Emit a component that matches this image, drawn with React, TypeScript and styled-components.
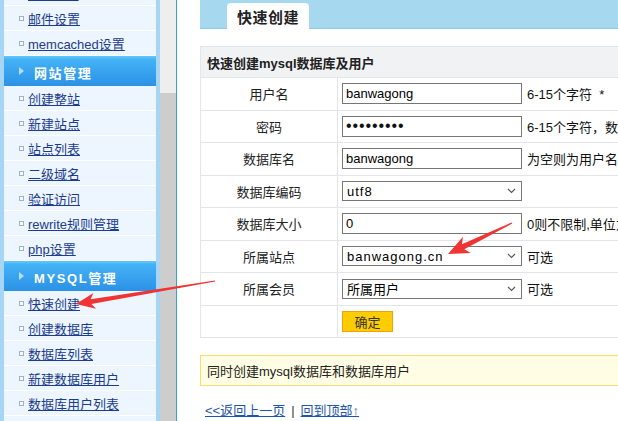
import React from 'react';
import styled, { createGlobalStyle } from 'styled-components';

const GlobalStyle = createGlobalStyle`
  html, body {
    margin: 0;
    padding: 0;
    overflow: hidden;
    background: #fff;
  }
  body {
    font-family: "Liberation Sans", "Noto Sans CJK SC", sans-serif;
    font-size: 13px;
    color: #333;
  }
`;

type MenuEntry = { head?: boolean; text: string };

const menu: MenuEntry[] = [
  { text: 'FTP设置' },
  { text: '邮件设置' },
  { text: 'memcached设置' },
  { head: true, text: '网站管理' },
  { text: '创建整站' },
  { text: '新建站点' },
  { text: '站点列表' },
  { text: '二级域名' },
  { text: '验证访问' },
  { text: 'rewrite规则管理' },
  { text: 'php设置' },
  { head: true, text: 'MYSQL管理' },
  { text: '快速创建' },
  { text: '创建数据库' },
  { text: '数据库列表' },
  { text: '新建数据库用户' },
  { text: '数据库用户列表' },
  { text: '修改数据库密码' },
];

type Pt = [number, number];

// tapered annotation arrow, thin at the tail and wide at the head
const arrowPoints = (tail: Pt, tip: Pt, headLen: number, headHalf: number, neck: number) => {
  const dx = tip[0] - tail[0];
  const dy = tip[1] - tail[1];
  const len = Math.hypot(dx, dy);
  const ux = dx / len;
  const uy = dy / len;
  const nx = -uy;
  const ny = ux;
  const at = (d: number, w: number): Pt => [tip[0] - ux * d + nx * w, tip[1] - uy * d + ny * w];
  const pts: Pt[] = [
    [tail[0] + nx * 0.6, tail[1] + ny * 0.6],
    at(headLen * 0.8, neck),
    at(headLen, headHalf),
    tip,
    at(headLen, -headHalf),
    at(headLen * 0.8, -neck),
    [tail[0] - nx * 0.6, tail[1] - ny * 0.6],
  ];
  return pts.map(p => `${p[0].toFixed(1)},${p[1].toFixed(1)}`).join(' ');
};

const App = () => {
  return (
    <>
      <GlobalStyle />
      <Page>
        <Sidebar>
          <MenuColumn>
            <MenuList>
              {menu.map((m, i) =>
                m.head ? (
                  <MenuHead key={i}>
                    <HeadArrow />
                    <HeadText>{m.text}</HeadText>
                  </MenuHead>
                ) : (
                  <MenuItem key={i}>
                    <Bullet />
                    <MenuLink href="#">{m.text}</MenuLink>
                  </MenuItem>
                )
              )}
            </MenuList>
          </MenuColumn>
          <ScrollTrack>
            <ScrollThumb />
          </ScrollTrack>
        </Sidebar>

        <Main>
          <TabBar>
            <Tab>快速创建</Tab>
          </TabBar>

          <FormTable>
            <colgroup>
              <LabelCol />
              <col />
            </colgroup>
            <tbody>
              <HeadRow>
                <HeadCell colSpan={2}>快速创建mysql数据库及用户</HeadCell>
              </HeadRow>
              <Row>
                <LabelCell>用户名</LabelCell>
                <FieldCell>
                  <FieldLine>
                    <TextInput readOnly value="banwagong" />
                    <Hint>6-15个字符 &nbsp;*</Hint>
                  </FieldLine>
                </FieldCell>
              </Row>
              <Row>
                <LabelCell>密码</LabelCell>
                <FieldCell>
                  <FieldLine>
                    <PasswordInput type="password" readOnly value="123456789" />
                    <Hint>6-15个字符，数字、字母</Hint>
                  </FieldLine>
                </FieldCell>
              </Row>
              <Row>
                <LabelCell>数据库名</LabelCell>
                <FieldCell>
                  <FieldLine>
                    <TextInput readOnly value="banwagong" />
                    <Hint>为空则为用户名</Hint>
                  </FieldLine>
                </FieldCell>
              </Row>
              <Row>
                <LabelCell>数据库编码</LabelCell>
                <FieldCell>
                  <FieldLine>
                    <SelectBox>
                      <span>utf8</span>
                      <Chevron />
                    </SelectBox>
                  </FieldLine>
                </FieldCell>
              </Row>
              <Row>
                <LabelCell>数据库大小</LabelCell>
                <FieldCell>
                  <FieldLine>
                    <TextInput readOnly value="0" />
                    <Hint>0则不限制,单位为M</Hint>
                  </FieldLine>
                </FieldCell>
              </Row>
              <Row>
                <LabelCell>所属站点</LabelCell>
                <FieldCell>
                  <FieldLine>
                    <SelectBox>
                      <span>banwagong.cn</span>
                      <Chevron />
                    </SelectBox>
                    <Hint>可选</Hint>
                  </FieldLine>
                </FieldCell>
              </Row>
              <Row>
                <LabelCell>所属会员</LabelCell>
                <FieldCell>
                  <FieldLine>
                    <SelectBox $plain>
                      <span>所属用户</span>
                      <Chevron />
                    </SelectBox>
                    <Hint>可选</Hint>
                  </FieldLine>
                </FieldCell>
              </Row>
              <Row>
                <LabelCell />
                <FieldCell>
                  <FieldLine>
                    <SubmitButton type="button">确定</SubmitButton>
                  </FieldLine>
                </FieldCell>
              </Row>
            </tbody>
          </FormTable>

          <Notice>同时创建mysql数据库和数据库用户</Notice>

          <Footer>
            <FootLink href="#">&lt;&lt;返回上一页</FootLink>
            <Divider>|</Divider>
            <FootLink href="#">回到顶部↑</FootLink>
          </Footer>
        </Main>

        <Overlay width="618" height="421" viewBox="0 0 618 421">
          <polygon points={arrowPoints([215, 281], [76, 304], 19, 8, 2.4)} fill="#f03333" />
          <polygon points={arrowPoints([512, 223], [448, 254], 21, 9, 2.8)} fill="#f03333" />
        </Overlay>
      </Page>
    </>
  );
};

const Chevron = () => (
  <svg width="9" height="6" viewBox="0 0 9 6">
    <path d="M1 1l3.5 3.5L8 1" fill="none" stroke="#555" strokeWidth="1.1" />
  </svg>
);

const Page = styled.div`
  position: relative;
  display: flex;
  width: 800px;
  height: 421px;
  overflow: hidden;
`;

const Sidebar = styled.div`
  display: flex;
  flex: 0 0 177px;
  height: 100%;
`;

const MenuColumn = styled.div`
  width: 152px;
  border-left: 4px solid #a6d5f7;
  border-right: 4px solid #a6d5f7;
  background: #edf5fe;
  overflow: hidden;
`;

const MenuList = styled.div`
  margin-top: -19px;
`;

const MenuItem = styled.div`
  display: flex;
  align-items: center;
  height: 24px;
  border-bottom: 1px solid #fff;
  padding-left: 15px;
`;

const Bullet = styled.span`
  flex: none;
  width: 3px;
  height: 3px;
  border: 1px solid #9cb3cc;
  background: #f6f9fd;
  margin-right: 4px;
`;

const MenuLink = styled.a`
  color: #1b3c8f;
  font-size: 13px;
  text-decoration: underline;
  white-space: nowrap;
`;

const MenuHead = styled.div`
  display: flex;
  align-items: center;
  height: 30px;
  box-sizing: border-box;
  padding: 2px 0 0 15px;
  background: linear-gradient(#62c9fd 0, #44b2f6 12%, #2b91e6 100%);
`;

const HeadArrow = styled.span`
  width: 0;
  height: 0;
  border-top: 4px solid transparent;
  border-bottom: 4px solid transparent;
  border-left: 5px solid #b5dcfb;
  margin: -3px 10px 0 0;
`;

const HeadText = styled.span`
  color: #fff;
  font-weight: bold;
  font-size: 13px;
  letter-spacing: 1.6px;
`;

const ScrollTrack = styled.div`
  display: flex;
  flex-direction: column;
  width: 16px;
  background: #eeeeee;
  border-right: 1px solid #2fa2e2;
`;

const ScrollThumb = styled.div`
  flex: 1;
  margin-top: 93px;
  background: #cdcdcd;
`;

const Main = styled.div`
  display: flex;
  flex-direction: column;
  padding-left: 23px;
  width: 600px;
`;

const TabBar = styled.div`
  height: 29px;
  box-sizing: border-box;
  padding: 3px 0 0 27px;
  background: #a6d9ef;
  border-bottom: 1px solid #8fcbe6;
`;

const Tab = styled.div`
  width: 82px;
  height: 26px;
  display: flex;
  align-items: center;
  justify-content: center;
  background: #fff;
  border-radius: 4px 4px 0 0;
  font-weight: bold;
  font-size: 15px;
  color: #222;
  letter-spacing: 0.5px;
`;

const FormTable = styled.table`
  width: 600px;
  margin-top: 17px;
  border-collapse: collapse;
  table-layout: fixed;
`;

const LabelCol = styled.col`
  width: 137px;
`;

const HeadRow = styled.tr`
  height: 31px;
`;

const HeadCell = styled.th`
  padding: 0 0 0 6px;
  text-align: left;
  background: #f1f2f4;
  border: 1px solid #e2e5ea;
  font-size: 13px;
  font-weight: bold;
  color: #222;
`;

const Row = styled.tr`
  height: 32.5px;
`;

const LabelCell = styled.td`
  padding: 0;
  text-align: center;
  border: 1px solid #e2e5ea;
  font-size: 13px;
  color: #222;
`;

const FieldCell = styled.td`
  padding: 0 0 0 4px;
  border: 1px solid #e2e5ea;
`;

const FieldLine = styled.div`
  display: flex;
  align-items: center;
  gap: 5px;
  white-space: nowrap;
`;

const TextInput = styled.input`
  width: 180px;
  height: 21px;
  box-sizing: border-box;
  margin: 0;
  padding: 0 3px;
  border: 1px solid #767676;
  font-family: "Liberation Sans", "Noto Sans CJK SC", sans-serif;
  font-size: 13px;
  color: #000;
  outline: none;
`;

const PasswordInput = styled(TextInput)`
  font-size: 16px;
  letter-spacing: 0.9px;
  color: #111;
`;

const SelectBox = styled.div<{ $plain?: boolean }>`
  display: flex;
  align-items: center;
  justify-content: space-between;
  width: 180px;
  height: 20px;
  box-sizing: border-box;
  padding: 0 5px 0 4px;
  border: 1px solid #767676;
  font-size: 13px;
  color: #000;
  letter-spacing: ${({ $plain }) => ($plain ? '0' : '1px')};
`;

const Hint = styled.span`
  font-size: 13px;
  color: #111;
`;

const SubmitButton = styled.button`
  width: 51px;
  height: 21px;
  margin: 0;
  padding: 0;
  background: #ffcc00;
  border: 1px solid #efa20c;
  font-family: "Liberation Sans", "Noto Sans CJK SC", sans-serif;
  font-size: 13px;
  color: #333;
`;

const Notice = styled.div`
  display: flex;
  align-items: center;
  margin-top: 17px;
  height: 31px;
  box-sizing: border-box;
  padding-left: 6px;
  background: #fffee4;
  border: 1px solid #f9dc6e;
  font-size: 13px;
  color: #222;
`;

const Footer = styled.div`
  margin-top: 17px;
  padding-left: 5px;
  line-height: 16px;
  font-size: 13px;
`;

const FootLink = styled.a`
  color: #1f55a8;
  text-decoration: underline;
`;

const Divider = styled.span`
  margin: 0 6px;
  color: #333;
`;

const Overlay = styled.svg`
  position: absolute;
  left: 0;
  top: 0;
  pointer-events: none;
`;

export default App;
